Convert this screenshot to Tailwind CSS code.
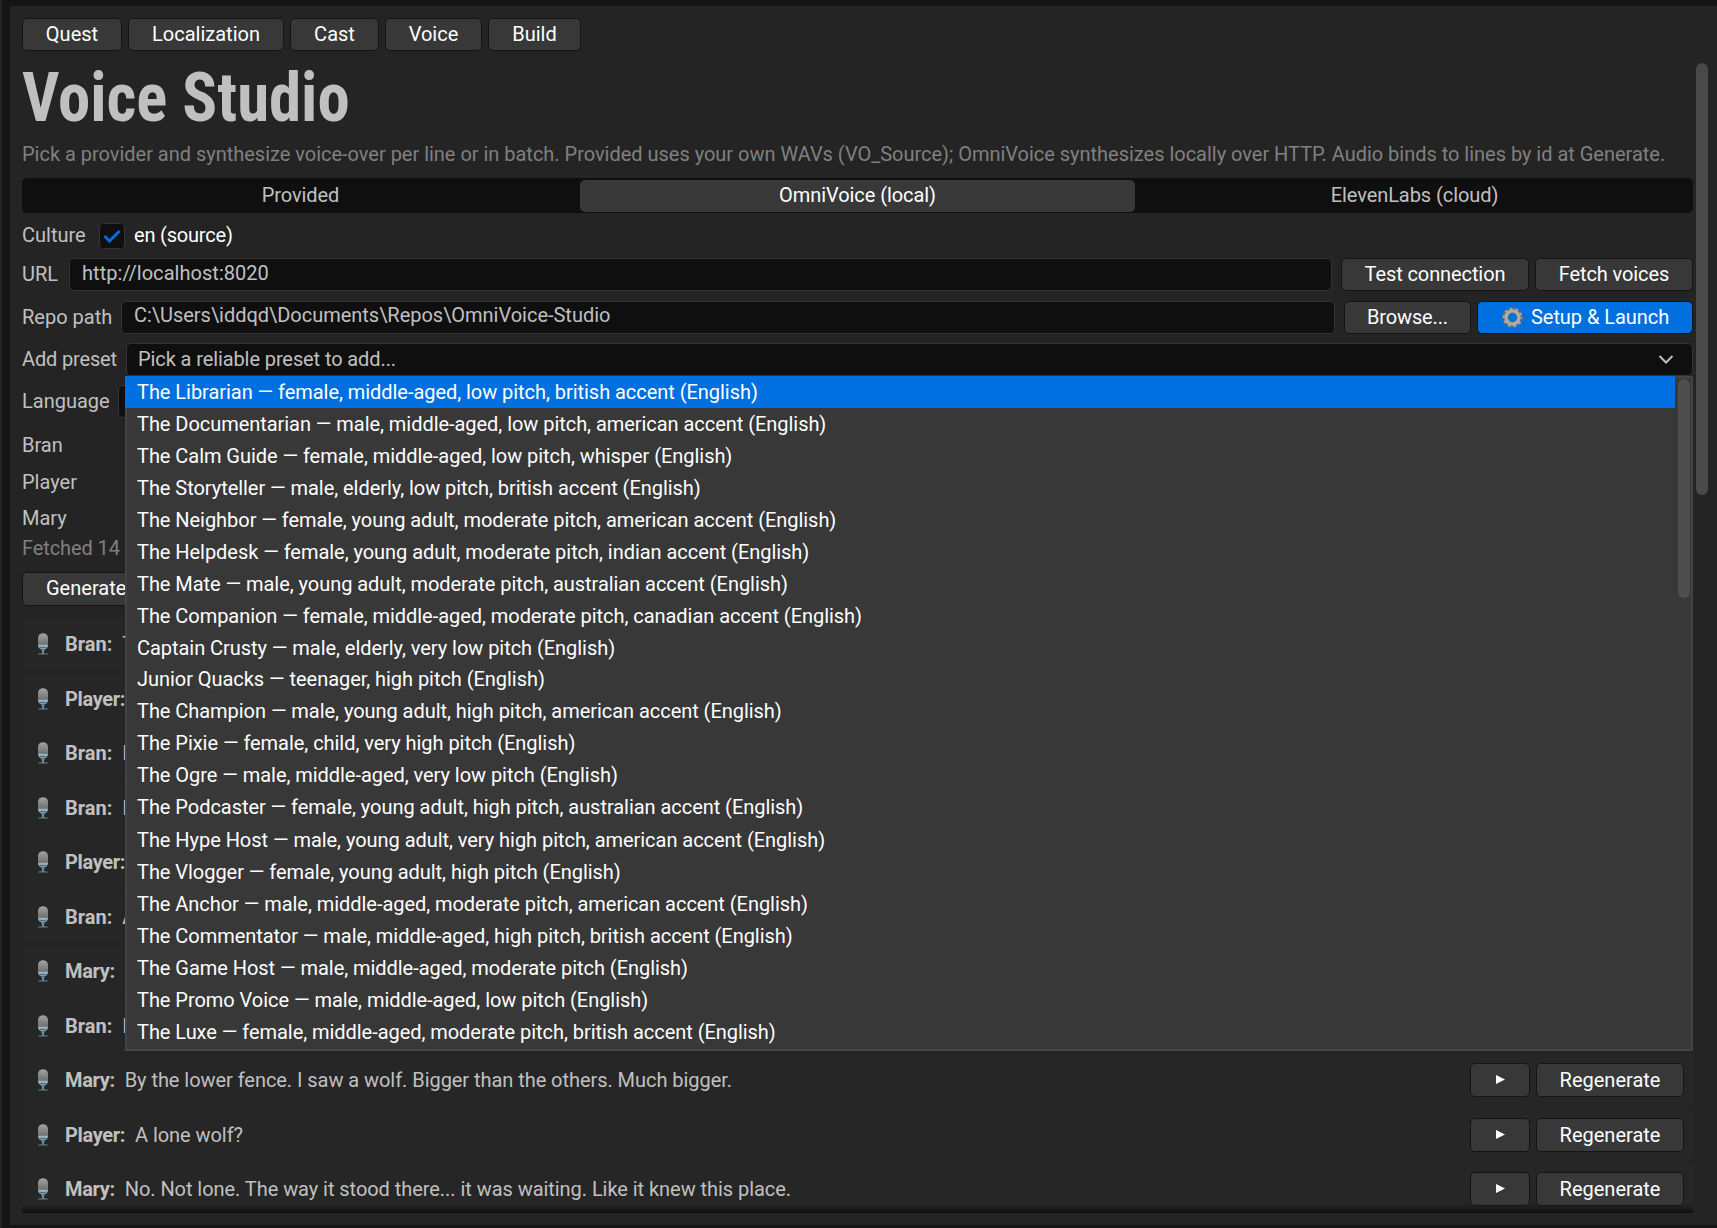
<!DOCTYPE html>
<html lang="en">
<head>
  <meta charset="UTF-8" />
  <meta name="viewport" content="width=device-width, initial-scale=1.0"/>
  <title>Voice Studio</title>
  <script src="https://cdn.jsdelivr.net/npm/@tailwindcss/browser@4"></script>
</head>
<body class="flex h-screen overflow-hidden bg-[#151515] font-[Roboto,sans-serif] text-[20px] leading-6 text-[#c0c0c0] whitespace-nowrap">
  <svg class="absolute size-0">
    <defs>
      <linearGradient id="capsule" x1="0" y1="0" x2="0" y2="1">
        <stop offset="0" stop-color="#a3a3a3"/>
        <stop offset="1" stop-color="#707070"/>
      </linearGradient>
      <linearGradient id="stand" x1="0" y1="0" x2="0" y2="1">
        <stop offset="0" stop-color="#9dbac6"/>
        <stop offset="1" stop-color="#5c7f8e"/>
      </linearGradient>
      <symbol id="mic" viewBox="0 0 12 22">
        <path d="M1 5a5 4.8 0 0 1 10 0v6.500H1z" fill="url(#capsule)"/>
        <path d="M1 11.500h10c0 2.600-1 4-3 4.700v1.300H7v2.700l4 .6v.8H1v-.8l4-.6v-2.700H4v-1.300c-2-.7-3-2.100-3-4.700z" fill="url(#stand)"/>
        <path d="M3 14.500h6M4 16.800h4" stroke="#3c5866" stroke-width=".8"/>
      </symbol>
    </defs>
  </svg>

  <div class="w-[2px] shrink-0 bg-[#242424]"></div>

  <main class="mt-[6px] mb-[3px] ml-[8px] flex flex-1 flex-col bg-[#242424] pl-[12px]">
    <nav class="mt-[12px] flex h-[33px] shrink-0 gap-[6px] text-white">
      <button class="w-[100px] rounded-[5px] border border-[#151515] bg-[#383838] pb-[2px]">Quest</button>
      <button class="w-[156px] rounded-[5px] border border-[#151515] bg-[#383838] pb-[2px]">Localization</button>
      <button class="w-[89px] rounded-[5px] border border-[#151515] bg-[#383838] pb-[2px]">Cast</button>
      <button class="w-[97px] rounded-[5px] border border-[#151515] bg-[#383838] pb-[2px]">Voice</button>
      <button class="w-[93px] rounded-[5px] border border-[#151515] bg-[#383838] pb-[2px]">Build</button>
    </nav>

    <div class="flex h-[1162px] shrink-0">
      <div class="relative flex w-[1671px] shrink-0 flex-col overflow-hidden">
        <h1 class="mt-[13px] h-[68px] shrink-0 origin-left scale-x-[0.953] font-['Roboto_Condensed',Roboto,sans-serif] text-[68px] leading-[68px] font-bold">Voice Studio</h1>
        <p class="mt-[10px] tracking-[-0.018px] text-[#808080]">Pick a provider and synthesize voice-over per line or in batch. Provided uses your own WAVs (VO_Source); OmniVoice synthesizes locally over HTTP. Audio binds to lines by id at Generate.</p>

        <!-- provider tabs -->
        <div class="mt-[12px] grid h-[35px] shrink-0 grid-cols-3 rounded-[5px] bg-[#0f0f0f] pt-[2px] pb-px text-center leading-[31px] tracking-[-0.07px]">
          <span>Provided</span>
          <span class="mx-px rounded-[5px] bg-[#383838] text-white">OmniVoice (local)</span>
          <span>ElevenLabs (cloud)</span>
        </div>

        <div class="mt-[10px] flex h-[25px] shrink-0 items-center">
          <span class="w-[77px] pb-[2px]">Culture</span>
          <span class="grid size-[26px] place-items-center rounded-[4px] border border-[#333] bg-[#0f0f0f]">
            <svg class="h-[14px] w-[18px]" viewBox="0 0 18 14" fill="none" stroke="#0070e0" stroke-width="3"><path d="M1.500 7l5 5L16.500 2"/></svg>
          </span>
          <span class="ml-[9px] pb-[2px] tracking-[-0.2px] text-white">en (source)</span>
        </div>

        <div class="mt-[10px] flex h-[33px] shrink-0 items-center">
          <span class="w-[47px] pb-px">URL</span>
          <div class="flex h-full flex-1 items-center rounded-[5px] border border-[#333] bg-[#0f0f0f] pb-[4px] pl-[12px] tracking-[0.04px]">http://localhost:8020</div>
          <button class="ml-[9px] h-full w-[188px] rounded-[5px] border border-[#151515] bg-[#383838] pb-[2px] tracking-[-0.1px] text-white">Test connection</button>
          <button class="ml-[6px] h-full w-[158px] rounded-[5px] border border-[#151515] bg-[#383838] pb-[2px] tracking-[-0.1px] text-white">Fetch voices</button>
        </div>

        <div class="mt-[10px] flex h-[33px] shrink-0 items-center">
          <span class="w-[99px] pb-[2px]">Repo path</span>
          <div class="flex h-full flex-1 items-center rounded-[5px] border border-[#333] bg-[#0f0f0f] pb-[5px] pl-[12px] tracking-[-0.02px]">C:\Users\iddqd\Documents\Repos\OmniVoice-Studio</div>
          <button class="ml-[9px] h-full w-[127px] rounded-[5px] border border-[#151515] bg-[#383838] pb-[2px] tracking-[-0.15px] text-white">Browse...</button>
          <button class="ml-[6px] flex h-full w-[216px] items-center rounded-[5px] border border-[#151515] bg-[#0070e0] pl-[24px] text-white">
            <svg class="size-[21px]" viewBox="0 0 21 21" fill="none">
              <circle cx="10.500" cy="10.500" r="9.100" stroke="#6f6c68" stroke-width="2.800" stroke-dasharray="3.600 2.118" stroke-dashoffset="1.800"/>
              <circle cx="10.500" cy="10.500" r="6.500" stroke="#77736f" stroke-width="4.600"/>
              <circle cx="10.500" cy="10.500" r="8.800" stroke="#a9a9a9" stroke-width="1.800" stroke-dasharray="2.600 3.118" stroke-dashoffset="1.300"/>
              <circle cx="10.500" cy="10.500" r="6.500" stroke="#adadad" stroke-width="3.200"/>
            </svg>
            <span class="ml-[8px] pb-[2px] tracking-[-0.05px]">Setup &amp; Launch</span>
          </button>
        </div>

        <div class="mt-[9px] flex h-[33px] shrink-0 items-center">
          <span class="w-[104px] pb-[2px] tracking-[-0.15px]">Add preset</span>
          <div class="flex h-full flex-1 items-center justify-between rounded-[5px] border border-[#333] bg-[#0f0f0f] pr-[18px] pl-[11px]">
            <span class="pb-[2px] tracking-[-0.1px]">Pick a reliable preset to add...</span>
            <svg class="h-[9px] w-[16px]" viewBox="0 0 16 9" fill="none" stroke="#c0c0c0" stroke-width="2"><path d="M1.500 1l6.500 6.500L14.500 1"/></svg>
          </div>
        </div>

        <div class="mt-[9px] flex h-[33px] shrink-0 items-center">
          <span class="w-[96px] pb-[2px]">Language</span>
          <div class="h-full flex-1 rounded-[5px] border border-[#333] bg-[#0f0f0f]"></div>
        </div>

        <div class="mt-[9px] flex h-[109px] shrink-0 flex-col">
          <span class="flex flex-1 items-center">Bran</span>
          <span class="flex flex-1 items-center pt-px">Player</span>
          <span class="flex flex-1 items-center">Mary</span>
        </div>
        <p class="tracking-[-0.1px] text-[#808080]">Fetched 14 v</p>
        <button class="mt-[12px] h-[34px] w-[148px] shrink-0 rounded-[5px] border border-[#151515] bg-[#383838] pb-[2px] pl-[23px] text-left text-white">Generate</button>

        <!-- voice lines, filled in below -->
        <div id="lines" class="mt-[12px] flex shrink-0 flex-col gap-[2.5px]"></div>

        <!-- preset menu -->
        <div class="absolute top-[325px] left-[103px] flex h-[675px] w-[1568px] border-2 border-[#444] bg-[#383838] text-white">
          <ul id="presets" class="-mt-[2px] -ml-[2px] w-[1550px] shrink-0 tracking-[-0.045px]"></ul>
          <div class="mt-px ml-[3px] h-[219px] w-[12px] shrink-0 rounded-full bg-[#4e4e4e]"></div>
        </div>

        <div class="absolute bottom-0 left-0 h-[9px] w-full bg-gradient-to-t from-[#101010] to-transparent"></div>
      </div>
      <div class="mt-[12px] ml-[3px] h-[432px] w-[12px] rounded-full bg-[#494949]"></div>
    </div>
  </main>

  <script>
    const presets = [
      'The Librarian — female, middle-aged, low pitch, british accent (English)',
      'The Documentarian — male, middle-aged, low pitch, american accent (English)',
      'The Calm Guide — female, middle-aged, low pitch, whisper (English)',
      'The Storyteller — male, elderly, low pitch, british accent (English)',
      'The Neighbor — female, young adult, moderate pitch, american accent (English)',
      'The Helpdesk — female, young adult, moderate pitch, indian accent (English)',
      'The Mate — male, young adult, moderate pitch, australian accent (English)',
      'The Companion — female, middle-aged, moderate pitch, canadian accent (English)',
      'Captain Crusty — male, elderly, very low pitch (English)',
      'Junior Quacks — teenager, high pitch (English)',
      'The Champion — male, young adult, high pitch, american accent (English)',
      'The Pixie — female, child, very high pitch (English)',
      'The Ogre — male, middle-aged, very low pitch (English)',
      'The Podcaster — female, young adult, high pitch, australian accent (English)',
      'The Hype Host — male, young adult, very high pitch, american accent (English)',
      'The Vlogger — female, young adult, high pitch (English)',
      'The Anchor — male, middle-aged, moderate pitch, american accent (English)',
      'The Commentator — male, middle-aged, high pitch, british accent (English)',
      'The Game Host — male, middle-aged, moderate pitch (English)',
      'The Promo Voice — male, middle-aged, low pitch (English)',
      'The Luxe — female, middle-aged, moderate pitch, british accent (English)'
    ];
    const rowHeight = { 8: 'h-[31px]', 13: 'h-[33px]' };
    document.getElementById('presets').innerHTML = presets.map((text, i) =>
      `<li class="${rowHeight[i] || 'h-[32px]'} ${i === 0 ? 'bg-[#0070e0]' : ''} pl-[12px] leading-[32px]">${text}</li>`
    ).join('');

    const lines = [
      ['Bran', 'T'],
      ['Player', ''],
      ['Bran', 'I'],
      ['Bran', 'I'],
      ['Player', ''],
      ['Bran', 'A'],
      ['Mary', ''],
      ['Bran', 'I'],
      ['Mary', 'By the lower fence. I saw a wolf. Bigger than the others. Much bigger.'],
      ['Player', 'A lone wolf?'],
      ['Mary', 'No. Not lone. The way it stood there... it was waiting. Like it knew this place.']
    ];
    document.getElementById('lines').innerHTML = lines.map(([name, text]) => `
      <div class="flex h-[52px] items-center rounded-[4px] bg-[#262626] pr-[9px] pl-[15px]">
        <svg class="h-[22px] w-[12px]"><use href="#mic"/></svg>
        <b class="ml-[16px] ${name === 'Bran' ? '' : 'tracking-[-0.35px]'}">${name}:</b>
        <span class="ml-[10px] flex-1 tracking-[-0.05px]">${text}</span>
        <button class="grid h-[34px] w-[60px] place-items-center rounded-[5px] border border-[#151515] bg-[#383838]">
          <svg class="mb-px h-[9px] w-[9px]" viewBox="0 0 9 9" fill="#fff"><path d="M0 0l9 4.500L0 9z"/></svg>
        </button>
        <button class="ml-[6px] h-[34px] w-[148px] rounded-[5px] border border-[#151515] bg-[#383838] text-white">Regenerate</button>
      </div>`).join('');
  </script>
</body>
</html>
